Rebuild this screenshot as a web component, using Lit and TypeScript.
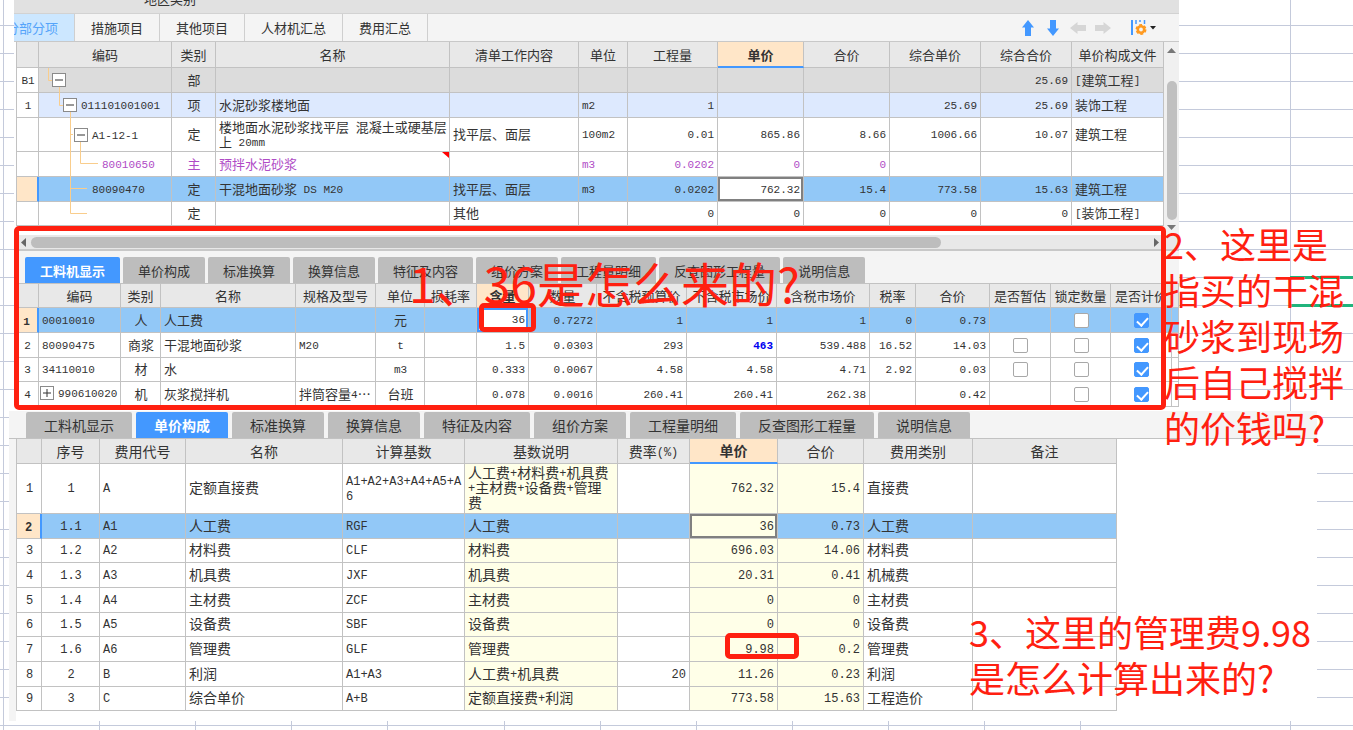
import { LitElement, html, css, nothing } from "lit";
import { customElement } from "lit/decorators.js";
import { classMap } from "lit/directives/class-map.js";

type Align = "l" | "c" | "r";
interface Col { t: string; w?: number; a: Align; sel?: boolean; tint?: boolean }
interface Row { n: string; cells: unknown[]; cls?: string; focus?: number }

/** Wraps runs of Latin letters and digits so that they take the narrow face. */
const txt = (s: string) =>
  s.split(/([\x20-\x7e]+)/).map((p, i) => (i % 2 ? html`<span class="n">${p}</span>` : p));

const grid = (name: string, headW: number, cols: Col[], rows: Row[]) => html`
  <table class=${name}>
    <colgroup>
      <col style="width:${headW}px" />
      ${cols.map((c) => (c.w ? html`<col style="width:${c.w}px" />` : html`<col />`))}
    </colgroup>
    <thead>
      <tr><th></th>${cols.map((c) => html`<th class=${c.sel ? "sel" : ""}>${txt(c.t)}</th>`)}</tr>
    </thead>
    <tbody>
      ${rows.map((r) => html`
        <tr class=${r.cls ?? ""}>
          <td class="c head">${txt(r.n)}</td>
          ${cols.map((c, i) => {
            const v = r.cells[i] ?? "";
            return html`<td class=${classMap({ [c.a]: true, tint: !!c.tint, focus: r.focus === i })}>${typeof v === "string" ? txt(v) : v}</td>`;
          })}
        </tr>`)}
    </tbody>
  </table>`;

const box = (label: string, on = false) =>
  html`<input class="tick" type="checkbox" aria-label=${label} ?checked=${on} />`;

const node = (h: number, lines: string, pad: number, text: string, sign = "") => html`
  <svg class="lines" width="132" height=${h} aria-hidden="true"><path d=${lines} /></svg>
  <div class="node" style="padding-left:${pad}px">
    ${sign ? html`<button class="fold" aria-label="展开或折叠">${icon(sign)}</button>` : nothing}
    <span>${txt(text)}</span>
  </div>`;

const icon = (sign: string) => html`<svg width="12" height="12" viewBox="0 0 12 12">
  <path d=${sign === "+" ? "M2 6h8M6 2v8" : "M2 6h8"} stroke="#333" fill="none" /></svg>`;

const tabNames = ["工料机显示", "单价构成", "标准换算", "换算信息", "特征及内容", "组价方案", "工程量明细", "反查图形工程量", "说明信息"];
const tabs = (cls: string, active: number) => html`
  <nav class="tabs ${cls}">
    ${tabNames.map((t, i) => html`<button class=${i === active ? "on" : ""}>${t}</button>`)}
  </nav>`;

const arrow = (label: string, rot: number, fill: string) => html`
  <button class="tool" aria-label=${label}>
    <svg width="16" height="16" viewBox="0 0 16 16">
      <path transform="rotate(${rot} 8 8)" fill=${fill} d="M8 0l6 7.500h-3v8.500H5V7.500H2z" />
    </svg>
  </button>`;

const billCols: Col[] = [
  { t: "编码", w: 133, a: "l" }, { t: "类别", w: 44, a: "c" }, { t: "名称", w: 234, a: "l" },
  { t: "清单工作内容", w: 129, a: "l" }, { t: "单位", w: 49, a: "l" }, { t: "工程量", w: 90, a: "r" },
  { t: "单价", w: 86, a: "r", sel: true }, { t: "合价", w: 86, a: "r" }, { t: "综合单价", w: 91, a: "r" },
  { t: "综合合价", w: 91, a: "r" }, { t: "单价构成文件", a: "l" },
];
const billRows: Row[] = [
  { n: "B1", cls: "part", cells: [node(25, "M9.500 0V12.500H13M20.500 19V25", 12, "", "-"), "部", "", "", "", "", "", "", "", "25.69", "[建筑工程]"] },
  { n: "1", cls: "item", cells: [node(25, "M20.500 0V12.500H24M31.500 19V25", 23, "011101001001", "-"), "项", "水泥砂浆楼地面", "", "m2", "1", "", "", "25.69", "25.69", "装饰工程"] },
  { n: "", cls: "tall", cells: [node(34, "M31.500 0V34M31.500 16.500H34M41.500 23V34", 34, "A1-12-1", "-"), "定", "楼地面水泥砂浆找平层 混凝土或硬基层上 20mm", "找平层、面层", "100m2", "0.01", "865.86", "8.66", "1006.66", "10.07", "建筑工程"] },
  { n: "", cls: "main", cells: [node(25, "M31.500 0V25M41.500 0V11.500H59", 62, "80010650"), "主", html`预拌水泥砂浆<i class="flag"></i>`, "", "m3", "0.0202", "0", "0"] },
  { n: "", cls: "cur", focus: 6, cells: [node(25, "M31.500 0V25M31.500 11.500H48", 52, "80090470"), "定", "干混地面砂浆 DS M20", "找平层、面层", "m3", "0.0202", "762.32", "15.4", "773.58", "15.63", "建筑工程"] },
  { n: "", cells: [node(24, "M31.500 0V11.500H48", 52, ""), "定", "", "其他", "", "0", "0", "0", "0", "0", "[装饰工程]"] },
];

const resCols: Col[] = [
  { t: "编码", w: 82, a: "l" }, { t: "类别", w: 40, a: "c" }, { t: "名称", w: 135, a: "l" },
  { t: "规格及型号", w: 80, a: "l" }, { t: "单位", w: 49, a: "c" }, { t: "损耗率", w: 52, a: "r" },
  { t: "含量", w: 52, a: "r", sel: true }, { t: "数量", w: 68, a: "r" }, { t: "不含税预算价", w: 90, a: "r" },
  { t: "不含税市场价", w: 90, a: "r" }, { t: "含税市场价", w: 93, a: "r" }, { t: "税率", w: 46, a: "r" },
  { t: "合价", w: 74, a: "r" }, { t: "是否暂估", w: 61, a: "c" }, { t: "锁定数量", w: 60, a: "c" },
  { t: "是否计价", w: 61, a: "c" }, { t: "", a: "l" },
];
const resRows: Row[] = [
  { n: "1", cls: "cur", cells: ["00010010", "人", "人工费", "", "元", "", html`<input class="edit" aria-label="含量" value="36" />`, "0.7272", "1", "1", "1", "0", "0.73", "", box("锁定数量"), box("是否计价", true)] },
  { n: "2", cells: ["80090475", "商浆", "干混地面砂浆", "M20", "t", "", "1.5", "0.0303", "293", html`<b class="n price">463</b>`, "539.488", "16.52", "14.03", box("是否暂估"), box("锁定数量"), box("是否计价", true)] },
  { n: "3", cells: ["34110010", "材", "水", "", "m3", "", "0.333", "0.0067", "4.58", "4.58", "4.71", "2.92", "0.03", box("是否暂估"), box("锁定数量"), box("是否计价", true)] },
  { n: "4", cells: [html`<div class="node"><button class="fold" aria-label="展开或折叠">${icon("+")}</button><span>${txt("990610020")}</span></div>`, "机", "灰浆搅拌机", "拌筒容量4…", "台班", "", "0.078", "0.0016", "260.41", "260.41", "262.38", "", "0.42", "", box("锁定数量"), box("是否计价", true)] },
];

const feeCols: Col[] = [
  { t: "序号", w: 58, a: "c" }, { t: "费用代号", w: 86, a: "l" }, { t: "名称", w: 157, a: "l" },
  { t: "计算基数", w: 122, a: "l" }, { t: "基数说明", w: 153, a: "l", tint: true }, { t: "费率(%)", w: 72, a: "r" },
  { t: "单价", w: 88, a: "r", sel: true, tint: true }, { t: "合价", w: 86, a: "r", tint: true },
  { t: "费用类别", w: 109, a: "l" }, { t: "备注", a: "l" },
];
const feeRows: Row[] = [
  { n: "1", cls: "big", cells: ["1", "A", "定额直接费", "A1+A2+A3+A4+A5+A6", "人工费+材料费+机具费+主材费+设备费+管理费", "", "762.32", "15.4", "直接费"] },
  { n: "2", cls: "cur", focus: 6, cells: ["1.1", "A1", "人工费", "RGF", "人工费", "", "36", "0.73", "人工费"] },
  { n: "3", cells: ["1.2", "A2", "材料费", "CLF", "材料费", "", "696.03", "14.06", "材料费"] },
  { n: "4", cells: ["1.3", "A3", "机具费", "JXF", "机具费", "", "20.31", "0.41", "机械费"] },
  { n: "5", cells: ["1.4", "A4", "主材费", "ZCF", "主材费", "", "0", "0", "主材费"] },
  { n: "6", cells: ["1.5", "A5", "设备费", "SBF", "设备费", "", "0", "0", "设备费"] },
  { n: "7", cells: ["1.6", "A6", "管理费", "GLF", "管理费", "", "9.98", "0.2", "管理费"] },
  { n: "8", cells: ["2", "B", "利润", "A1+A3", "人工费+机具费", "20", "11.26", "0.23", "利润"] },
  { n: "9", cells: ["3", "C", "综合单价", "A+B", "定额直接费+利润", "", "773.58", "15.63", "工程造价"] },
];

@customElement("app-root")
export class AppRoot extends LitElement {
  static styles = css`
    * { box-sizing: border-box; }
    :host {
      display: block; position: relative; min-height: 100vh; overflow: hidden; background: #fff;
      font: 13px/15px "Noto Sans CJK SC", sans-serif; color: #333;
    }
    button { font: inherit; color: inherit; border: 0; padding: 0; background: none; }

    .sheet {
      position: absolute; inset: 0; display: flex;
      background: repeating-linear-gradient(#fff 0 25px, #c4cadb 25px 26px, #fff 26px 28px);
    }
    .sheet i { flex: none; border-right: 1px solid #c4cadb; }
    .picked {
      position: absolute; left: 1290px; right: -4px; top: 276px; height: 31px;
      border: 3px solid #20b47c; border-left-width: 1px;
    }

    .app { position: relative; margin: 0 174px 0 14px; background: #fff; overflow: hidden; }
    .strip { height: 14px; background: #e1e1e1; border-bottom: 1px solid #d2d2d2; padding-left: 130px; overflow: hidden; display: flex; align-items: flex-end; }
    .strip span { margin-bottom: 7px; }
    .modes { display: flex; height: 28px; background: #f4f4f4; border-bottom: 1px solid #c8c8c8; }
    .modes > button { padding: 0 16px; border-right: 1px solid #cfcfcf; }
    .modes > button.on { width: 61px; padding: 0 16px 0 0; display: flex; justify-content: flex-end; align-items: center; background: #cce7ff; color: #55a4fa; overflow: hidden; white-space: nowrap; }
    .tools { margin-left: auto; margin-right: 21px; display: flex; align-items: center; gap: 9px; }
    .tool { display: flex; }
    .tool.last { margin-left: 10px; }

    table { width: 100%; table-layout: fixed; border-collapse: separate; border-spacing: 0; }
    th, td { padding: 0 2px 2px 3px; height: 25px; border: 0 solid #c2c2c2; border-width: 0 1px 1px 0; position: relative; }
    th { font-weight: 400; background: #e8e8e8; padding: 0; white-space: nowrap; overflow: hidden; text-align: center; }
    th.sel { background: #ffe6c8; font-weight: 700; }
    tr:nth-child(3n) td { height: 24px; }
    td { background: #fff; word-break: break-all; }
    td.c { text-align: center; }
    td.r { text-align: right; padding-right: 3px; }
    .n { font-family: "Liberation Mono", monospace; font-size: 11px; line-height: 0; vertical-align: 1px; }
    td.tint { background: #ffffe8; }
    .part td:not(.head) { background: #dcdcdc; }
    .item td:not(.head) { background: #dde9fe; }
    .main td { color: #b04cc6; }
    .cur td:not(.head) { background: #92c8f7; }
    .cur td.head { background: #ffe6c8; border-right: 2px solid #4398ff; font-weight: 700; padding: 0; }
    .cur td.focus { background: #fff; box-shadow: inset 0 0 0 2px #808080; }
    .cur td.focus.tint { background: #ffffe8; }
    .bill tr.tall td { height: 34px; }
    .bill th { height: 26px; }
    .bill th.sel, .fee th.sel { border-bottom: 2px solid #4398ff; }
    .res th { height: 24px; }
    .fee tr.big td { height: 50px; }
    .fee { font-size: 14px; }
    .fee .n { font-size: 12px; }
    .fee th:first-child, .fee td:first-child, .bill th:first-child, .bill td:first-child { border-left: 1px solid #c2c2c2; }

    .lines { position: absolute; left: 0; top: 0; }
    .lines path { stroke: #f9cd8c; fill: none; }
    .node { position: relative; display: flex; align-items: center; gap: 4px; margin-left: -2px; white-space: nowrap; }
    td:has(.lines) { padding: 0; }
    td:has(.lines) .node { margin-left: 1px; }
    .node span { padding-bottom: 1px; }
    .fold { display: flex; width: 14px; height: 14px; border: 1px solid #8a8a8a; background: #fff; }
    .flag { position: absolute; right: 0; top: 0; border: 0 solid transparent; border-left-width: 7px; border-top: 6px solid #f00; }

    .upper { display: flex; padding-left: 2px; }
    .upper .area { flex: 1; min-width: 0; padding-bottom: 9px; }
    .vbar { width: 15px; background: #f0f0f0; display: flex; flex-direction: column; align-items: center; padding: 6px 0 5px; gap: 4px; }
    .vbar i { flex: 1; width: 10px; margin-top: 24px; margin-bottom: 1px; border-radius: 5px; background: #c0c0c0; }
    .hbar { display: flex; align-items: center; height: 16px; background: #e8e8e8; border-bottom: 2px solid #c8c8c8; padding: 0 20px 0 7px; gap: 5px; }
    .hbar i { width: 80%; margin-right: auto; height: 11px; border-radius: 6px; background: #bdbdbd; }
    .tabs { display: flex; background: #f4f4f4; border-bottom: 1px solid #c2c2c2; }
    .tabs button { height: 26px; background: #bdbdbd; border-radius: 2px 2px 0 0; white-space: nowrap; }
    .tabs .on { background: #4398ff; color: #fff; font-weight: 700; }
    .small { padding: 6px 0 0 11px; gap: 3px; }
    .small button { padding: 0 15px; }
    .large { padding: 1px 0 0 17px; gap: 4px; font-size: 14px; }
    .large button { padding: 0 18px; }
    .lower { padding-left: 2px; margin-bottom: 4px; }

    .tick { appearance: none; display: block; margin: 0 auto; width: 15px; height: 15px; border: 1px solid #a8a8a8; border-radius: 2px; background: #fff; position: relative; }
    td:has(.tick) { padding-bottom: 0; }
    .tick:checked { background: #4398ff; border-color: #4398ff; }
    .tick:checked::before { content: ""; position: absolute; left: 4px; top: 1px; width: 5px; height: 9px; border: solid #fff; border-width: 0 2px 2px 0; transform: rotate(42deg); }
    td:has(.edit) { padding: 0 !important; }
    .edit { display: block; width: 100%; height: 24px; border: 2px solid #4398ff; border-radius: 0; background: #fff; padding: 0 1px; text-align: right; color: inherit; outline: 0; font: 11px "Liberation Mono", monospace; }
    .price { color: #0000f0; }

    .second { position: relative; margin: 0 36px 0 9px; background: #fff; }
    .second .body { border-left: 7px solid #f4f4f4; padding: 0 200px 10px 0; }

    .mark { position: absolute; border: 5px solid #ff2010; border-radius: 5px; }
    .note { position: absolute; margin: 0; color: #ff2010; font-size: 36px; line-height: 46px; white-space: pre; }
    .m1 { left: 14px; right: 187px; top: 226px; height: 184px; }
    .m2 { left: 479px; top: 303px; width: 57px; height: 29px; }
    .m3 { left: 725px; top: 633px; width: 74px; height: 26px; }
    .n1 { left: 409px; top: 259px; font-size: 48px; }
    .n2 { left: 1164px; top: 220px; }
    .n3 { left: 969px; top: 608px; }
  `;

  render() {
    return html`
      <div class="sheet" aria-hidden="true">
        ${[4, 96, 96, 96, 96, 117, 96, 96, 96, 96, 96, 96, 210].map((w) => html`<i style="width:${w}px"></i>`)}
        <div class="picked"></div>
      </div>

      <section class="app">
        <div class="strip"><span>地区类别</span></div>
        <nav class="modes">
          <button class="on">分部分项</button>
          <button>措施项目</button><button>其他项目</button><button>人材机汇总</button><button>费用汇总</button>
          <div class="tools">
            ${arrow("上移", 0, "#4398ff")}${arrow("下移", 180, "#4398ff")}
            ${arrow("左移", 270, "#d6d6d6")}${arrow("右移", 90, "#d6d6d6")}
            <button class="tool last" aria-label="列设置">
              <svg width="28" height="18" viewBox="0 0 28 18">
                <path d="M2 1v15" stroke="#4398ff" stroke-width="2" />
                <path d="M6 1v4M10 1v2M14.500 1v4" stroke="#4398ff" stroke-width="1.500" />
                <circle cx="11" cy="10.500" r="3.200" fill="none" stroke="#ff9a1f" stroke-width="2.600" />
                <circle cx="11" cy="10.500" r="4.700" fill="none" stroke="#ff9a1f" stroke-width="1.600" stroke-dasharray="2.900 2.020" />
                <path d="M20 7h6l-3 3.500z" fill="#222" />
              </svg>
            </button>
          </div>
        </nav>
        <div class="upper">
          <div class="area">${grid("bill", 23, billCols, billRows)}</div>
          <div class="vbar" aria-hidden="true">
            <svg width="9" height="5"><path d="M0 5L4.500 0L9 5z" fill="#777" /></svg>
            <i></i>
            <svg width="9" height="5"><path d="M0 0h9L4.500 5z" fill="#777" /></svg>
          </div>
        </div>
        <div class="hbar" aria-hidden="true">
          <svg width="5" height="9"><path d="M5 0v9L0 4.500z" fill="#666" /></svg>
          <i></i>
          <svg width="5" height="9"><path d="M0 0v9L5 4.500z" fill="#666" /></svg>
        </div>
        ${tabs("small", 0)}
        <div class="lower">${grid("res", 23, resCols, resRows)}</div>
      </section>

      <section class="second">
        ${tabs("large", 1)}
        <div class="body">${grid("fee", 26, feeCols, feeRows)}</div>
      </section>

      <div class="mark m1"></div>
      <div class="mark m2"></div>
      <div class="mark m3"></div>
      <p class="note n1">1、36是怎么来的?</p>
      <p class="note n2">2、这里是
指买的干混
砂浆到现场
后自己搅拌
的价钱吗?</p>
      <p class="note n3">3、这里的管理费9.98
是怎么计算出来的?</p>`;
  }
}
